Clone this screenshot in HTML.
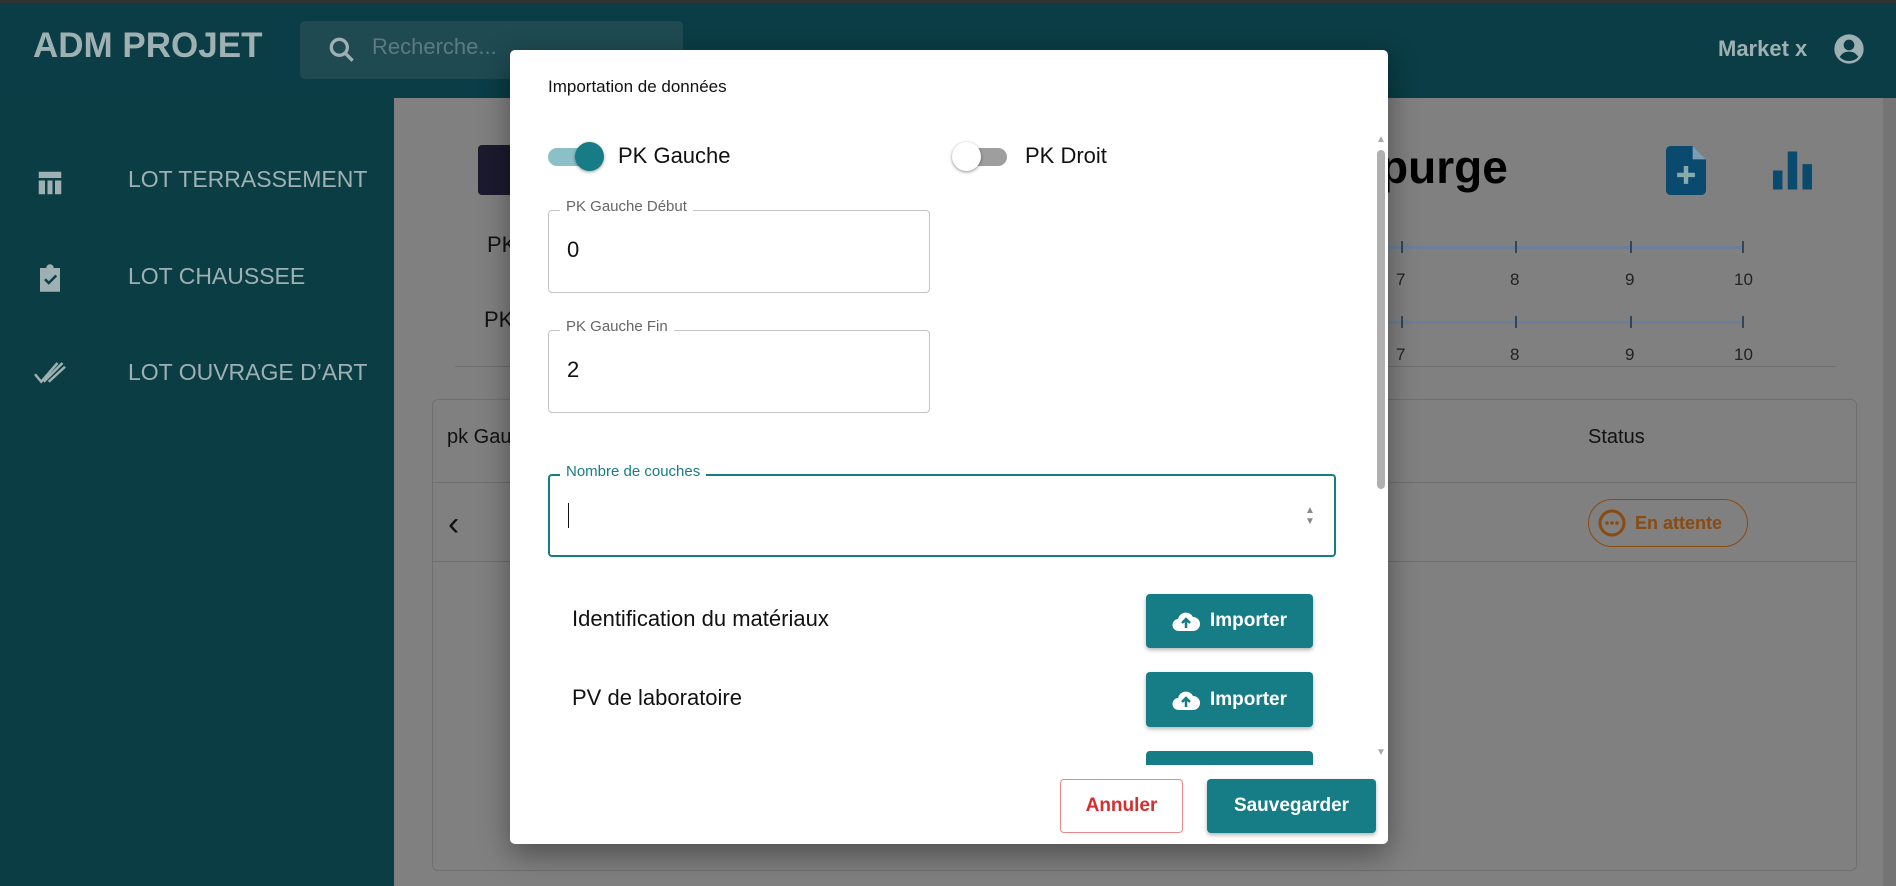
<!DOCTYPE html>
<html><head><meta charset="utf-8"><style>
*{box-sizing:border-box;margin:0;padding:0}
body{width:1896px;height:886px;overflow:hidden;position:relative;background:#808080;font-family:"Liberation Sans",sans-serif}
.abs{position:absolute}
.hdr{left:0;top:0;width:1896px;height:98px;background:#0a3d45;border-top:3px solid #333}
.side{left:0;top:98px;width:394px;height:788px;background:#0b3e44}
.st{color:#9fb0b2;font-size:23px;left:128px}
.modal{left:510px;top:50px;width:878px;height:794px;background:#fff;border-radius:5px;box-shadow:0 10px 30px rgba(0,0,0,.4);overflow:hidden}
.fld{border:1px solid #c4c4c4;border-radius:4px}
.lab{font-size:15px;color:#666;background:#fff;padding:0 6px}
.btn{background:#167c86;color:#fff;border-radius:4px;font-weight:bold;font-size:19px;box-shadow:0 2px 4px rgba(0,0,0,.3);display:flex;align-items:center;justify-content:center;gap:10px}
.tick{width:2px;height:12px;background:#33455a}
.num{font-size:17px;color:#222}
</style></head><body>
<div class="abs hdr"></div>
<div class="abs" style="left:33px;top:26px;font-size:35px;font-weight:bold;color:#9fb0b2">ADM PROJET</div>
<div class="abs" style="left:300px;top:21px;width:383px;height:58px;background:#1f4a51;border-radius:5px"></div>
<svg class="abs" style="left:326px;top:34px" width="32" height="32" viewBox="0 0 24 24"><circle cx="10" cy="10" r="6" fill="none" stroke="#9fb0b2" stroke-width="2.5"/><path d="M14.5 14.5 20 20" stroke="#9fb0b2" stroke-width="2.5"/></svg>
<div class="abs" style="left:372px;top:34px;font-size:22px;color:#5f7a7e">Recherche...</div>
<div class="abs" style="left:1718px;top:36px;font-size:22px;color:#9fb0b2;font-weight:bold">Market x</div>
<svg class="abs" style="left:1833px;top:33px" width="32" height="32" viewBox="0 0 24 24"><circle cx="12" cy="12" r="11" fill="#9fb0b2"/><circle cx="12" cy="9" r="4" fill="#0a3d45"/><path d="M5 18c2-3 4-4 7-4s5 1 7 4c-2 2-4 3-7 3s-5-1-7-3z" fill="#0a3d45"/></svg>
<div class="abs side"></div>
<svg class="abs" style="left:35px;top:168px" width="30" height="30" viewBox="0 0 24 24"><path d="M3 3h18v5H3zM3 10h5v11H3zM10 10h4v11h-4zM16 10h5v11h-5z" fill="#9fb0b2"/></svg>
<div class="abs st" style="top:166px">LOT TERRASSEMENT</div>
<svg class="abs" style="left:35px;top:262px" width="30" height="32" viewBox="0 0 24 24"><path d="M4 4h5a3 3 0 0 1 6 0h5v19H4z" fill="#9fb0b2"/><path d="M8 13l3 3 6-6" fill="none" stroke="#0b3e44" stroke-width="2"/></svg>
<div class="abs st" style="top:263px">LOT CHAUSSEE</div>
<svg class="abs" style="left:32px;top:358px" width="36" height="30" viewBox="0 0 28 24"><path d="M2 13l5 6L20 4M9 19L24 4M13 19l13-12" fill="none" stroke="#9fb0b2" stroke-width="2"/></svg>
<div class="abs st" style="top:359px">LOT OUVRAGE D’ART</div>
<div class="abs" style="left:478px;top:145px;width:44px;height:50px;background:#1b1a2e;border-radius:4px"></div>
<div class="abs" style="left:487px;top:232px;font-size:22px;color:#111">PK</div>
<div class="abs" style="left:484px;top:307px;font-size:22px;color:#111">PK</div>
<div class="abs" style="left:1380px;top:140px;font-size:46px;font-weight:bold;color:#000">purge</div>
<svg class="abs" style="left:1666px;top:145px" width="40" height="51" viewBox="0 0 36 44"><path d="M4 0h20l12 12v28a4 4 0 0 1-4 4H4a4 4 0 0 1-4-4V4a4 4 0 0 1 4-4z" fill="#0a4a6e"/><path d="M24 0v12h12z" fill="#7f9cb0"/><path d="M18 18v16M10 26h16" stroke="#8aa" stroke-width="4"/></svg>
<svg class="abs" style="left:1773px;top:151px" width="40" height="39" viewBox="0 0 38 36"><path d="M0 18h9v18H0zM14 0h9v36h-9zM28 12h9v24h-9z" fill="#0a4a6e"/></svg>
<div class="abs" style="left:1380px;top:246px;width:364px;height:3px;background:#6b7f99"></div>
<div class="abs" style="left:1380px;top:321px;width:364px;height:3px;background:#6b7f99"></div>
<div class="abs tick" style="left:1401px;top:241px"></div><div class="abs tick" style="left:1515px;top:241px"></div><div class="abs tick" style="left:1630px;top:241px"></div><div class="abs tick" style="left:1742px;top:241px"></div>
<div class="abs tick" style="left:1401px;top:316px"></div><div class="abs tick" style="left:1515px;top:316px"></div><div class="abs tick" style="left:1630px;top:316px"></div><div class="abs tick" style="left:1742px;top:316px"></div>
<div class="abs num" style="left:1396px;top:270px">7</div><div class="abs num" style="left:1510px;top:270px">8</div><div class="abs num" style="left:1625px;top:270px">9</div><div class="abs num" style="left:1734px;top:270px">10</div>
<div class="abs num" style="left:1396px;top:345px">7</div><div class="abs num" style="left:1510px;top:345px">8</div><div class="abs num" style="left:1625px;top:345px">9</div><div class="abs num" style="left:1734px;top:345px">10</div>
<div class="abs" style="left:455px;top:366px;width:1381px;height:1px;background:#6e6e6e"></div>
<div class="abs" style="left:432px;top:399px;width:1425px;height:472px;border:1px solid #707070;border-radius:6px"></div>
<div class="abs" style="left:432px;top:482px;width:1425px;height:1px;background:#6e6e6e"></div>
<div class="abs" style="left:432px;top:561px;width:1425px;height:1px;background:#6e6e6e"></div>
<div class="abs" style="left:447px;top:426px;font-size:20px;color:#111">pk Gau</div>
<div class="abs" style="left:1588px;top:426px;font-size:20px;color:#111">Status</div>
<div class="abs" style="left:448px;top:505px;font-size:34px;color:#111">&lsaquo;</div>
<div class="abs" style="left:1588px;top:499px;width:160px;height:48px;border:1px solid #8a4a10;border-radius:24px;color:#8a4a10;font-size:18px;font-weight:bold;display:flex;align-items:center;padding-left:9px;gap:9px"><svg width="28" height="28" viewBox="0 0 28 28"><circle cx="14" cy="14" r="12" fill="none" stroke="#8a4a10" stroke-width="3"/><circle cx="9" cy="14" r="1.8" fill="#8a4a10"/><circle cx="14" cy="14" r="1.8" fill="#8a4a10"/><circle cx="19" cy="14" r="1.8" fill="#8a4a10"/></svg>En attente</div>
<div class="abs" style="left:1883px;top:98px;width:13px;height:788px;background:#747474"></div>

<div class="abs modal">
<div class="abs" style="left:38px;top:27px;font-size:17px;color:#111">Importation de données</div>
<div class="abs" style="left:38px;top:98px;width:52px;height:18px;border-radius:9px;background:#8bc0c6"></div>
<div class="abs" style="left:65px;top:92px;width:29px;height:29px;border-radius:50%;background:#167c86;box-shadow:0 1px 3px rgba(0,0,0,.4)"></div>
<div class="abs" style="left:108px;top:93px;font-size:22px;color:#111">PK Gauche</div>
<div class="abs" style="left:445px;top:98px;width:52px;height:18px;border-radius:9px;background:#9e9e9e"></div>
<div class="abs" style="left:442px;top:92px;width:29px;height:29px;border-radius:50%;background:#fff;box-shadow:0 1px 3px rgba(0,0,0,.45)"></div>
<div class="abs" style="left:515px;top:93px;font-size:22px;color:#111">PK Droit</div>
<div class="abs fld" style="left:38px;top:160px;width:382px;height:83px"></div>
<div class="abs lab" style="left:50px;top:148px">PK Gauche Début</div>
<div class="abs" style="left:57px;top:187px;font-size:22px;color:#111">0</div>
<div class="abs fld" style="left:38px;top:280px;width:382px;height:83px"></div>
<div class="abs lab" style="left:50px;top:268px">PK Gauche Fin</div>
<div class="abs" style="left:57px;top:307px;font-size:22px;color:#111">2</div>
<div class="abs" style="left:38px;top:424px;width:788px;height:83px;border:2px solid #167c86;border-radius:4px"></div>
<div class="abs lab" style="left:50px;top:413px;color:#167c86">Nombre de couches</div>
<div class="abs" style="left:58px;top:453px;width:1px;height:25px;background:#111"></div>
<div class="abs" style="left:795px;top:455px;font-size:10px;color:#888;line-height:11px">▲<br>▼</div>
<div class="abs" style="left:62px;top:556px;font-size:22px;color:#111">Identification du matériaux</div>
<div class="abs btn" style="left:636px;top:544px;width:167px;height:54px"><svg width="28" height="22" viewBox="0 0 28 22"><path d="M7 21a6 6 0 0 1-1-12A8 8 0 0 1 21 7a7 7 0 0 1 0 14z" fill="#fff"/><path d="M14 18v-7M10 13l4-4 4 4" stroke="#167c86" stroke-width="2.5" fill="none"/></svg>Importer</div>
<div class="abs" style="left:62px;top:635px;font-size:22px;color:#111">PV de laboratoire</div>
<div class="abs btn" style="left:636px;top:622px;width:167px;height:55px"><svg width="28" height="22" viewBox="0 0 28 22"><path d="M7 21a6 6 0 0 1-1-12A8 8 0 0 1 21 7a7 7 0 0 1 0 14z" fill="#fff"/><path d="M14 18v-7M10 13l4-4 4 4" stroke="#167c86" stroke-width="2.5" fill="none"/></svg>Importer</div>
<div class="abs" style="left:636px;top:701px;width:167px;height:14px;background:#167c86;border-radius:4px 4px 0 0"></div>
<div class="abs" style="left:866px;top:84px;font-size:10px;color:#aaa">▲</div>
<div class="abs" style="left:867px;top:100px;width:8px;height:339px;background:#b0b0b0;border-radius:4px"></div>
<div class="abs" style="left:866px;top:697px;font-size:10px;color:#aaa">▼</div>
<div class="abs" style="left:550px;top:729px;width:123px;height:54px;border:1px solid #e88;border-radius:4px;color:#d32f2f;font-size:19px;font-weight:bold;display:flex;align-items:center;justify-content:center">Annuler</div>
<div class="abs btn" style="left:697px;top:729px;width:169px;height:54px">Sauvegarder</div>
</div>
</body></html>
